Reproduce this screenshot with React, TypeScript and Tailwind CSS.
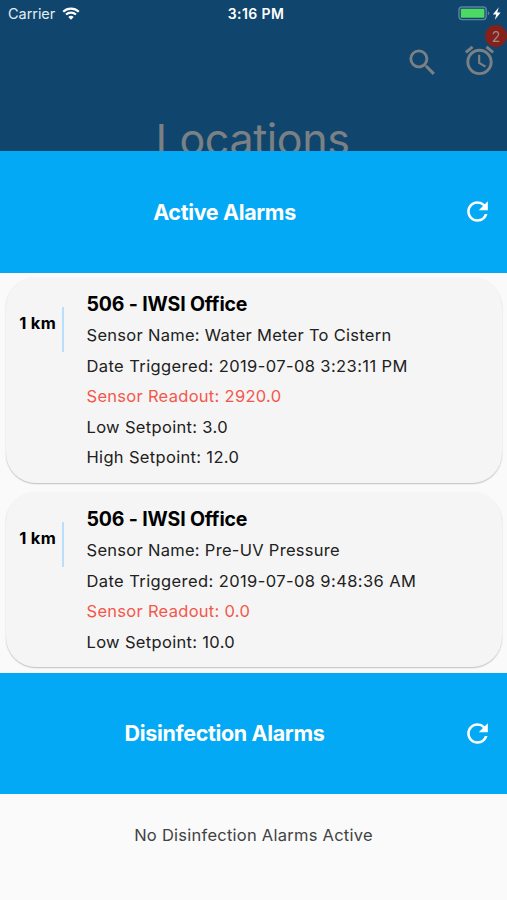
import { FC } from 'react'
import { MdAccessAlarm, MdRefresh, MdSearch } from 'react-icons/md'

interface IAlarm {
  distance: string
  location: string
  sensor: string
  date: string
  readout: string
  setpoints: string[]
}

const alarms: IAlarm[] = [
  {
    distance: '1 km',
    location: '506 - IWSI Office',
    sensor: 'Water Meter To Cistern',
    date: '2019-07-08 3:23:11 PM',
    readout: '2920.0',
    setpoints: ['Low Setpoint: 3.0', 'High Setpoint: 12.0']
  },
  {
    distance: '1 km',
    location: '506 - IWSI Office',
    sensor: 'Pre-UV Pressure',
    date: '2019-07-08 9:48:36 AM',
    readout: '0.0',
    setpoints: ['Low Setpoint: 10.0']
  }
]

const StatusBar: FC = () => (
  <div className="grid h-7 grid-cols-3 items-center pl-2 pr-[4px] text-white">
    <div className="flex items-center gap-[7px]">
      <span className="text-[14.5px] tracking-[-0.05px] text-[#e3edf4]">Carrier</span>
      <svg className="mt-[-2px] h-[13px] w-[18px]" viewBox="0 0 18 13" fill="none">
        <path d="M1.2 4.7a11.2 11.2 0 0 1 15.6 0" stroke="currentColor" strokeWidth="2.2" />
        <path d="M4 7.6a7.2 7.2 0 0 1 10 0" stroke="currentColor" strokeWidth="2.1" />
        <path d="M6.3 10a3.9 3.9 0 0 1 5.4 0L9 12.8z" fill="currentColor" />
      </svg>
    </div>
    <span className="mt-[-1px] pl-[1px] text-center text-[14px] font-semibold tracking-[0.4px]">
      3:16 PM
    </span>
    <div className="flex items-center justify-end">
      <svg className="h-[16px] w-[45px]" viewBox="0 0 45 16" fill="none">
        <rect x="1" y="1" width="27.2" height="12.6" rx="3" stroke="#5b83a0" strokeWidth="1.4" />
        <rect x="2.8" y="2.8" width="23.6" height="9" rx="0.8" fill="#4cd964" />
        <path d="M29.8 5.2c2 .5 2 3.6 0 4.2z" fill="#5b83a0" />
        <path d="M40.8 1.2 34.8 8.4h3.4l-1.3 5.4 5.7-7.2h-3.4z" fill="white" />
      </svg>
    </div>
  </div>
)

const SectionHeader: FC<{ title: string }> = ({ title }) => (
  <div className="flex h-[121.5px] shrink-0 items-center bg-[#03a9f4] pr-[14px] text-white">
    <h2 className="flex-1 pl-[13px] pr-[26px] text-center text-[21.5px] font-bold tracking-[-0.35px]">
      {title}
    </h2>
    <MdRefresh className="size-[31px]" />
  </div>
)

const AlarmCard: FC<{ alarm: IAlarm }> = ({ alarm }) => (
  <div className="flex rounded-[30px] bg-[#f5f5f5] pb-[10px] pt-[11px] shadow-[0_1px_1.5px_rgba(0,0,0,0.24)]">
    <div className="mt-[19px] flex h-[45px] w-[58px] shrink-0 items-start justify-end whitespace-nowrap border-r-2 border-[#bbdefb] pr-[6px] pt-[4px] text-[16.5px] font-bold tracking-[0.3px] text-black">
      {alarm.distance}
    </div>
    <div className="ml-[22.5px] text-[16.5px] leading-[30.5px] tracking-[0.29px] text-[#212121]">
      <h3 className="h-[32.5px] text-[19.5px] font-bold leading-[32px] tracking-[-0.15px] text-black">
        {alarm.location}
      </h3>
      <p>Sensor Name: {alarm.sensor}</p>
      <p className="tracking-[0.4px]">Date Triggered: {alarm.date}</p>
      <p className="text-[#f4574b]">Sensor Readout: {alarm.readout}</p>
      {alarm.setpoints.map((setpoint) => (
        <p key={setpoint} className="tracking-[0.33px]">
          {setpoint}
        </p>
      ))}
    </div>
  </div>
)

const App: FC = () => (
  <div className="flex h-[900px] w-[507px] flex-col overflow-hidden bg-[#fafafa] font-['Inter',sans-serif]">
    {/* Dimmed page behind the sheet */}
    <header className="h-[151px] shrink-0 overflow-hidden bg-[#10466d] text-[#7b8084]">
      <StatusBar />
      <div className="flex h-[70px] items-start justify-end gap-[22px] pr-[10px] pt-[15px]">
        <MdSearch className="mt-[2px] size-[35px]" />
        <div className="relative">
          <MdAccessAlarm className="size-[35px]" />
          <span className="absolute -right-[10px] -top-[18px] flex size-[22px] items-center justify-center rounded-full bg-[#85211a] text-[14px] text-[#a18a86]">
            2
          </span>
        </div>
      </div>
      <h1 className="pr-[2px] pt-[15px] text-center text-[43px] leading-[52px] tracking-[-0.4px]">
        Locations
      </h1>
    </header>

    {/* Alarm sheet */}
    <SectionHeader title="Active Alarms" />
    <div className="flex h-[400px] shrink-0 flex-col gap-[9px] pl-[6px] pr-[5px] pt-[4px]">
      {alarms.map((alarm) => (
        <AlarmCard key={alarm.sensor} alarm={alarm} />
      ))}
    </div>
    <SectionHeader title="Disinfection Alarms" />
    <p className="pt-[29px] text-center text-[16.5px] leading-6 tracking-[0.25px] text-[#424242]">
      No Disinfection Alarms Active
    </p>
  </div>
)

export default App
